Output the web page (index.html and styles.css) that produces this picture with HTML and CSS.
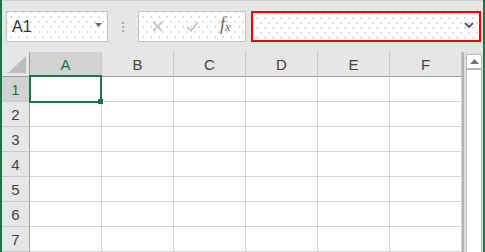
FILE: index.html
```html
<html lang="en">
<head>
    <meta charset="UTF-8">
    <meta name="viewport" content="width=device-width, initial-scale=1.0">
    <link rel="stylesheet" href="styles.css">
</head>
<body>
    <div class="toolbar">
        <div class="namebox dotted">
            <span class="ref">A1</span>
            <svg class="drop" width="7" height="4" viewBox="0 0 7 4"><path d="M0 0h7L3.5 4z" fill="#6d6d6d"/></svg>
        </div>
        <div class="grip"><i></i><i></i><i></i></div>
        <div class="fbuttons dotted">
            <svg class="ficon" width="11" height="11" viewBox="0 0 11 11"><path d="M1 1l9 9M10 1l-9 9" stroke="#c8c8c8" stroke-width="1.8" fill="none"/></svg>
            <svg class="ficon" width="13" height="11" viewBox="0 0 13 11"><path d="M1 6l4 4 7-9" stroke="#c8c8c8" stroke-width="2" fill="none"/></svg>
            <span class="fx"><i>f</i><sub>x</sub></span>
        </div>
        <div class="formula dotted">
            <svg class="chev" width="10" height="6" viewBox="0 0 10 6"><path d="M1 1l4 4 4-4" stroke="#5c5c5c" stroke-width="2" fill="none"/></svg>
        </div>
    </div>

    <div class="sheet">
        <div class="grid">
            <div class="corner">
                <svg width="18" height="17" viewBox="0 0 18 17"><path d="M18 0v17H0z" fill="#bcbcbc"/></svg>
            </div>
            <div class="colhead sel">A</div>
            <div class="colhead">B</div>
            <div class="colhead">C</div>
            <div class="colhead">D</div>
            <div class="colhead">E</div>
            <div class="colhead">F</div>

            <div class="rowhead sel">1</div>
            <div class="cell"></div><div class="cell"></div><div class="cell"></div><div class="cell"></div><div class="cell"></div><div class="cell"></div>
            <div class="rowhead">2</div>
            <div class="cell"></div><div class="cell"></div><div class="cell"></div><div class="cell"></div><div class="cell"></div><div class="cell"></div>
            <div class="rowhead">3</div>
            <div class="cell"></div><div class="cell"></div><div class="cell"></div><div class="cell"></div><div class="cell"></div><div class="cell"></div>
            <div class="rowhead">4</div>
            <div class="cell"></div><div class="cell"></div><div class="cell"></div><div class="cell"></div><div class="cell"></div><div class="cell"></div>
            <div class="rowhead">5</div>
            <div class="cell"></div><div class="cell"></div><div class="cell"></div><div class="cell"></div><div class="cell"></div><div class="cell"></div>
            <div class="rowhead">6</div>
            <div class="cell"></div><div class="cell"></div><div class="cell"></div><div class="cell"></div><div class="cell"></div><div class="cell"></div>
            <div class="rowhead">7</div>
            <div class="cell"></div><div class="cell"></div><div class="cell"></div><div class="cell"></div><div class="cell"></div><div class="cell"></div>

            <div class="selection"><span class="handle"></span></div>
        </div>
        <div class="vscroll">
            <div class="track">
                <div class="up">
                    <svg width="9" height="5" viewBox="0 0 9 5"><path d="M0 5h9L4.5 0z" fill="#737373"/></svg>
                </div>
            </div>
        </div>
    </div>
</body>
</html>
```

FILE: styles.css
```css
body {
    margin: 0;
    width: 481px;
    height: 252px;
    overflow: hidden;
    background-color: #e6e6e6;
    border-left: 2px solid #217346;
    border-right: 2px solid #217346;
    font-family: "Liberation Sans", Arial, sans-serif;
}
.toolbar {
    display: flex;
    align-items: flex-start;
    box-sizing: border-box;
    border-top: 1px solid #d2d2d2;
    padding: 10px 0 0 4px;
    height: 52px;
}
.dotted {
    background-color: #ffffff;
    background-image:
        radial-gradient(circle, #dcdcdc 0.7px, transparent 1px),
        radial-gradient(circle, #dcdcdc 0.7px, transparent 1px);
    background-size: 8px 10px;
    background-position: 0 0, 4px 5px;
}
.namebox {
    width: 102px;
    height: 31px;
    box-sizing: border-box;
    border: 1px solid #c6c6c6;
    display: flex;
    align-items: center;
    padding: 0 5px 0 5px;
}
.ref {
    flex: 1;
    font-size: 16px;
    color: #333333;
    padding-top: 1px;
}
.drop {
    margin-bottom: 3px;
}
.grip {
    width: 30px;
    height: 31px;
    display: flex;
    flex-direction: column;
    align-items: center;
    justify-content: center;
    gap: 2px;
}
.grip i {
    display: block;
    width: 2px;
    height: 2px;
    background-color: #a9a9a9;
}
.fbuttons {
    width: 108px;
    height: 31px;
    box-sizing: border-box;
    border: 1px solid #c6c6c6;
    display: flex;
    align-items: center;
    padding: 0 0 0 13px;
}
.ficon {
    margin-right: 23px;
}
.ficon + .ficon {
    margin-right: 21px;
}
.fx {
    font-family: "Liberation Serif", "Times New Roman", serif;
    font-style: italic;
    font-size: 18px;
    color: #666666;
    margin-top: -4px;
}
.fx sub {
    font-size: 12px;
    vertical-align: -1px;
}
.formula {
    width: 230px;
    height: 31px;
    box-sizing: border-box;
    border: 2px solid #f00000;
    margin-left: 5px;
    display: flex;
    align-items: center;
    justify-content: flex-end;
    padding: 0 5px 4px 0;
}
.sheet {
    display: flex;
    height: 200px;
}
.grid {
    position: relative;
    display: grid;
    grid-template-columns: 28px repeat(6, 72px);
    grid-auto-rows: 25px;
    background-color: #ffffff;
}
.corner,
.colhead,
.rowhead,
.cell {
    box-sizing: border-box;
}
.corner {
    background-color: #e6e6e6;
    border-right: 1px solid #9f9f9f;
    border-bottom: 1px solid #9f9f9f;
    display: flex;
    align-items: flex-end;
    justify-content: flex-end;
    padding: 0 3px 3px 0;
}
.colhead {
    background-color: #e6e6e6;
    border-right: 1px solid #c9c9c9;
    border-bottom: 1px solid #9f9f9f;
    font-size: 15px;
    color: #444444;
    display: flex;
    align-items: center;
    justify-content: center;
    padding-top: 1px;
}
.rowhead {
    background-color: #e6e6e6;
    border-right: 1px solid #9f9f9f;
    border-bottom: 1px solid #c9c9c9;
    font-size: 15px;
    color: #444444;
    display: flex;
    align-items: center;
    justify-content: center;
    padding-top: 1px;
}
.colhead.sel,
.rowhead.sel {
    background-color: #d2d2d2;
    color: #217346;
}
.cell {
    border-right: 1px solid #d4d4d4;
    border-bottom: 1px solid #d4d4d4;
}
.selection {
    position: absolute;
    left: 27px;
    top: 23px;
    width: 73px;
    height: 28px;
    box-sizing: border-box;
    border: 2px solid #217346;
}
.handle {
    position: absolute;
    right: -4px;
    bottom: -4px;
    width: 5px;
    height: 5px;
    background-color: #217346;
    border: 1px solid #ffffff;
    border-top: none;
    border-left: none;
}
.vscroll {
    width: 21px;
    box-sizing: border-box;
    border-left: 2px solid #b3b3b3;
    padding: 2px 1px 0 2px;
    background-color: #dedede;
}
.track {
    height: 100%;
    box-sizing: border-box;
    border: 1px solid #bdbdbd;
    border-bottom: none;
    background-color: #ffffff;
}
.up {
    height: 15px;
    box-sizing: border-box;
    border-bottom: 2px solid #b8b8b8;
    display: flex;
    align-items: center;
    justify-content: center;
}
```
